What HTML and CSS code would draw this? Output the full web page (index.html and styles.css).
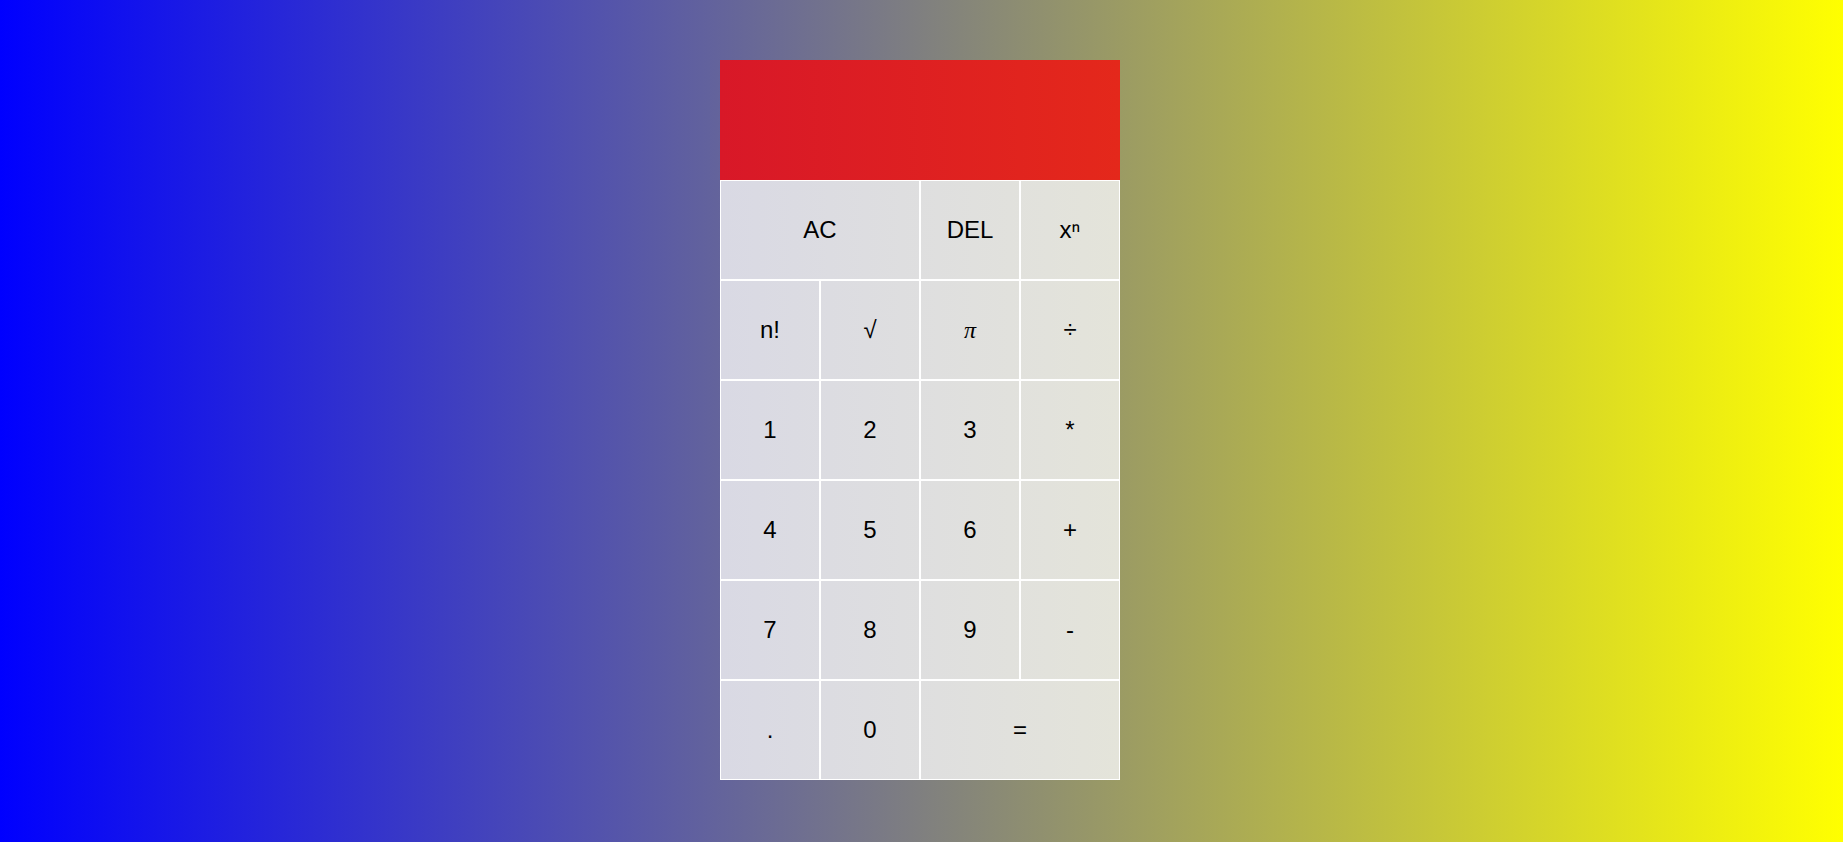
FILE: index.html
```html
<!DOCTYPE html>
<html lang="en">
<head>
<meta charset="utf-8">
<title>Calculator</title>
<link rel="stylesheet" href="styles.css">
</head>
<body>
<main class="page">
  <div class="calculator">
    <div class="display"></div>
    <div class="keys">
      <button class="key span-2">AC</button>
      <button class="key">DEL</button>
      <button class="key">xⁿ</button>
      <button class="key">n!</button>
      <button class="key">√</button>
      <button class="key pi">π</button>
      <button class="key">÷</button>
      <button class="key">1</button>
      <button class="key">2</button>
      <button class="key">3</button>
      <button class="key">*</button>
      <button class="key">4</button>
      <button class="key">5</button>
      <button class="key">6</button>
      <button class="key">+</button>
      <button class="key">7</button>
      <button class="key">8</button>
      <button class="key">9</button>
      <button class="key">-</button>
      <button class="key">.</button>
      <button class="key">0</button>
      <button class="key span-2">=</button>
    </div>
  </div>
</main>
</body>
</html>
```

FILE: styles.css
```css
* {
  box-sizing: border-box;
}

html, body {
  margin: 0;
  height: 100%;
}

body {
  background: linear-gradient(to right, #0000ff, #ffff00);
  font-family: "Liberation Sans", Arial, sans-serif;
}

.page {
  display: flex;
  justify-content: center;
  padding-top: 60px;
  padding-right: 3px;
}

.calculator {
  width: 400px;
  display: flex;
  flex-direction: column;
}

.display {
  height: 120px;
  background: linear-gradient(to right, #d81828, #e4281b);
}

.keys {
  display: grid;
  grid-template-columns: repeat(4, 100px);
  grid-auto-rows: 100px;
  background: linear-gradient(to right, #d9d9e4, #e4e4da);
}

.key {
  border: 1px solid #ffffff;
  background: transparent;
  font-family: "Liberation Sans", Arial, sans-serif;
  font-size: 24px;
  color: #000000;
  padding: 0;
  margin: 0;
}

.key.span-2 {
  grid-column: span 2;
}

.key.pi {
  font-family: "Liberation Serif", "Times New Roman", serif;
  font-style: italic;
}
```
